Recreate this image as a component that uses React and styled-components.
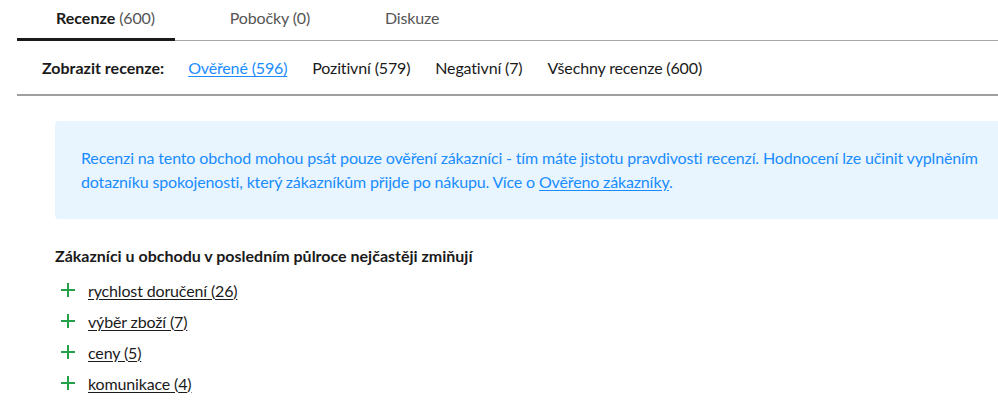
import React from 'react';
import styled, { createGlobalStyle } from 'styled-components';

const GlobalStyle = createGlobalStyle`
  html, body {
    margin: 0;
    padding: 0;
    background: #fff;
    overflow: hidden;
  }
  body {
    font-family: Lato, 'Noto Sans', Arial, sans-serif;
    color: #1a1a1a;
    letter-spacing: -0.15px;
  }
`;

const Page = styled.div`
  width: 1100px;
  padding-left: 17px;
  box-sizing: border-box;
`;

const TabList = styled.div`
  display: flex;
  gap: 16px;
  height: 41px;
  border-bottom: 1px solid #a8a8a8;
  box-sizing: border-box;
`;

const Tab = styled.div`
  display: flex;
  align-items: center;
  padding: 0 20px 3px 39px;
  margin-bottom: -1px;
  font-size: 16px;
  color: #555;
  border-bottom: 3px solid ${(p) => (p.$active ? '#1a1a1a' : 'transparent')};

  b {
    font-weight: 700;
    letter-spacing: 0;
    color: #1a1a1a;
    margin-right: 4px;
  }
`;

const FilterRow = styled.div`
  display: flex;
  align-items: center;
  gap: 25px;
  height: 55px;
  padding: 0 0 0 25px;
  border-bottom: 2px solid #a0a0a0;
  box-sizing: border-box;
  font-size: 16px;
`;

const FilterLabel = styled.span`
  font-weight: 700;
  letter-spacing: 0;
  margin-right: -1px;
`;

const FilterItem = styled.a`
  color: ${(p) => (p.$active ? '#1a8cff' : '#1a1a1a')};
  text-decoration: ${(p) => (p.$active ? 'underline' : 'none')};
  text-underline-offset: 2px;
  cursor: pointer;
`;

const Content = styled.div`
  padding: 25px 0 0 38px;
`;

const InfoBox = styled.div`
  background: #e8f5fe;
  border-radius: 4px;
  padding: 25px 26px;
  font-size: 16px;
  line-height: 24px;
  color: #1a8cff;
  width: 1010px;
  box-sizing: border-box;

  a {
    color: #1a8cff;
    text-decoration: underline;
    text-underline-offset: 2px;
  }
`;

const Heading = styled.div`
  margin-top: 25px;
  font-size: 16px;
  line-height: 24px;
  font-weight: 700;
  letter-spacing: 0;
`;

const TagList = styled.ul`
  list-style: none;
  margin: 10px 0 0 0;
  padding: 0;
  display: flex;
  flex-direction: column;
  gap: 7px;
`;

const Tag = styled.li`
  display: flex;
  align-items: center;
  gap: 13px;
  height: 24px;
  padding-left: 6px;
  font-size: 16px;

  a {
    color: #1a1a1a;
    text-decoration: underline;
    text-underline-offset: 2px;
  }
`;

const Plus = () => (
  <svg width="14" height="14" viewBox="0 0 14 14">
    <path d="M7 0v14M0 7h14" stroke="#27a04a" strokeWidth="2" />
  </svg>
);

const tags = [
  ['rychlost doručení', 26],
  ['výběr zboží', 7],
  ['ceny', 5],
  ['komunikace', 4],
];

export default function App() {
  return (
    <Page>
      <GlobalStyle />
      <TabList>
        <Tab $active>
          <b>Recenze</b> (600)
        </Tab>
        <Tab>Pobočky (0)</Tab>
        <Tab>Diskuze</Tab>
      </TabList>

      <FilterRow>
        <FilterLabel>Zobrazit recenze:</FilterLabel>
        <FilterItem $active>Ověřené (596)</FilterItem>
        <FilterItem>Pozitivní (579)</FilterItem>
        <FilterItem>Negativní (7)</FilterItem>
        <FilterItem>Všechny recenze (600)</FilterItem>
      </FilterRow>

      <Content>
        <InfoBox>
          Recenzi na tento obchod mohou psát pouze ověření zákazníci - tím máte jistotu pravdivosti recenzí.
          Hodnocení lze učinit vyplněním dotazníku spokojenosti, který zákazníkům přijde po nákupu. Více o{' '}
          <a>Ověřeno zákazníky</a>.
        </InfoBox>

        <Heading>Zákazníci u obchodu v posledním půlroce nejčastěji zmiňují</Heading>

        <TagList>
          {tags.map(([name, count]) => (
            <Tag key={name}>
              <Plus />
              <a>
                {name} ({count})
              </a>
            </Tag>
          ))}
        </TagList>
      </Content>
    </Page>
  );
}
